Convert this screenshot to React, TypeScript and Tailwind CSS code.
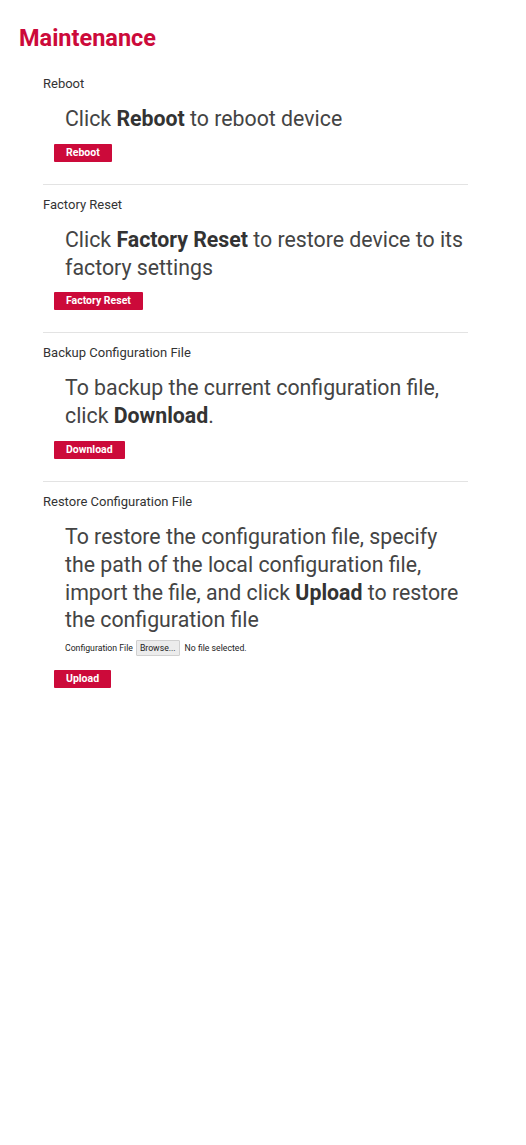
const RED = 'bg-[#cc0a3a]'

function ActionButton({ label }: { label: string }) {
  return (
    <button
      className={`${RED} ml-[11px] block h-[18px] rounded-[1px] px-3 text-[10.5px] font-bold leading-[18px] text-white`}
      type="button"
    >
      {label}
    </button>
  )
}

function Section({
  title,
  children,
  button,
  divider = true,
  extra,
}: {
  title: string
  children: React.ReactNode
  button: string
  divider?: boolean
  extra?: React.ReactNode
}) {
  return (
    <section className={divider ? 'border-b border-[#e3e3e3] pb-[22px]' : ''}>
      <h2 className="pt-[12px] text-[13px] leading-[16px] text-[#333]">
        {title}
      </h2>
      <p className="mt-[13px] ml-[22px] w-[402px] text-[21.3px] leading-[27.8px] text-[#444]">
        {children}
      </p>
      {extra}
      <div className={extra ? 'mt-[14px]' : 'mt-[11px]'}>
        <ActionButton label={button} />
      </div>
    </section>
  )
}

export default function App() {
  return (
    <div
      className="min-h-[1145px] bg-white pl-[19px] pt-[24px]"
      style={{ fontFamily: 'Roboto, "Liberation Sans", sans-serif' }}
    >
      <h1 className="text-[23.5px] font-bold leading-[28px] text-[#cc0a3a]">
        Maintenance
      </h1>
      <div className="ml-[24px] mt-[12px] w-[425px]">
        <Section title="Reboot" button="Reboot">
          Click <b className="text-[#333]">Reboot</b> to reboot device
        </Section>
        <Section title="Factory Reset" button="Factory Reset">
          Click <b className="text-[#333]">Factory Reset</b> to restore device
          to its factory settings
        </Section>
        <Section title="Backup Configuration File" button="Download">
          To backup the current configuration file, click{' '}
          <b className="text-[#333]">Download</b>.
        </Section>
        <Section
          title="Restore Configuration File"
          button="Upload"
          divider={false}
          extra={
            <div className="mt-[6px] flex items-center pl-[22px] text-[8.7px] leading-[16px] text-[#222]">
              <span>Configuration File</span>
              <span className="ml-[3px] h-[16px] rounded-[1px] border border-[#d0d0d0] bg-[#ececec] px-[3px] text-[8.7px] leading-[14px] text-[#222]">
                Browse...
              </span>
              <span className="ml-[5px]">No file selected.</span>
            </div>
          }
        >
          To restore the configuration file, specify the path of the local
          configuration file, import the file, and click{' '}
          <b className="text-[#333]">Upload</b> to restore the configuration
          file
        </Section>
      </div>
    </div>
  )
}
